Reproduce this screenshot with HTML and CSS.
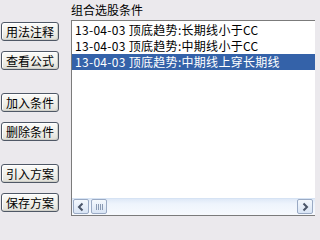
FILE: index.html
```html
<!DOCTYPE html>
<html>
<head>
<meta charset="utf-8">
<link rel="stylesheet" href="styles.css">
</head>
<body>
<div class="wrap">
  <div class="btns">
    <div class="grp">
      <button class="btn">用法注释</button>
      <button class="btn">查看公式</button>
    </div>
    <div class="grp">
      <button class="btn">加入条件</button>
      <button class="btn">删除条件</button>
    </div>
    <div class="grp">
      <button class="btn">引入方案</button>
      <button class="btn">保存方案</button>
    </div>
  </div>
  <div class="panel">
    <div class="label">组合选股条件</div>
    <div class="list">
      <div class="rows">
        <div class="row">13-04-03 顶底趋势:长期线小于CC</div>
        <div class="row">13-04-03 顶底趋势:中期线小于CC</div>
        <div class="row sel">13-04-03 顶底趋势:中期线上穿长期线</div>
      </div>
      <div class="hscroll">
        <div class="sbtn">
          <svg width="14" height="14" viewBox="0 0 14 14"><path d="M8.5 3.5 L5 7 L8.5 10.5" fill="none" stroke="#4a5568" stroke-width="2"/></svg>
        </div>
        <div class="thumb">
          <svg width="14" height="14" viewBox="0 0 14 14"><path d="M4.5 4v6M6.5 4v6M8.5 4v6M10.5 4v6" stroke="#8a9ab3" stroke-width="1"/></svg>
        </div>
        <div class="track"></div>
        <div class="sbtn">
          <svg width="14" height="14" viewBox="0 0 14 14"><path d="M5.5 3.5 L9 7 L5.5 10.5" fill="none" stroke="#4a5568" stroke-width="2"/></svg>
        </div>
      </div>
    </div>
  </div>
</div>
</body>
</html>
```

FILE: styles.css
```css
html, body {
  margin: 0;
  padding: 0;
}
body {
  background: #ebe9ed;
  font-family: "Noto Sans CJK SC", "Noto Sans", sans-serif;
  font-size: 12px;
  color: #000;
  width: 315px;
  height: 221px;
  overflow: hidden;
}
.wrap {
  display: flex;
  height: 221px;
}
.btns {
  width: 71px;
  flex: none;
  box-sizing: border-box;
  padding: 22px 0 0 1px;
  display: flex;
  flex-direction: column;
  gap: 23px;
}
.grp {
  display: flex;
  flex-direction: column;
  gap: 10px;
}
.btn {
  width: 58px;
  height: 19px;
  box-sizing: border-box;
  margin: 0;
  padding: 0;
  border: 1px solid #4f5866;
  border-radius: 3px;
  background: linear-gradient(#fbfbf9, #eeeee8 60%, #dfdfd8);
  box-shadow: inset 1px 1px 0 #ffffff, inset -1px -1px 0 #cfcfc8;
  font-family: "Noto Sans CJK SC", sans-serif;
  font-size: 12px;
  line-height: 16px;
  color: #000;
  text-align: center;
}
.panel {
  flex: none;
  width: 245px;
  display: flex;
  flex-direction: column;
}
.label {
  height: 20px;
  box-sizing: border-box;
  padding-top: 2px;
  line-height: 16px;
}
.list {
  height: 196px;
  box-sizing: border-box;
  border: 1px solid #7b7b7b;
  border-right-color: #a0a0a0;
  background: #fff;
  display: flex;
  flex-direction: column;
}
.rows {
  flex: 1;
  padding-top: 1px;
}
.row {
  height: 16px;
  line-height: 15px;
  padding-left: 3px;
  letter-spacing: 0.3px;
  white-space: nowrap;
}
.row.sel {
  background: #3462a9;
  color: #fff;
}
.hscroll {
  height: 17px;
  flex: none;
  display: flex;
  align-items: flex-start;
  padding: 0 2px 0 1px;
  background: linear-gradient(#dfe9f7, #eef4fc 30%, #f7fafe);
  border-top: 1px solid #d6e3f4;
  box-sizing: border-box;
}
.sbtn, .thumb {
  width: 16px;
  height: 15px;
  box-sizing: border-box;
  border: 1px solid #9aaac4;
  border-radius: 2px;
  background: linear-gradient(#f4f8fd, #d9e5f5);
  display: flex;
  align-items: center;
  justify-content: center;
}
.thumb {
  margin-left: 2px;
}
.track {
  flex: 1;
}
```
